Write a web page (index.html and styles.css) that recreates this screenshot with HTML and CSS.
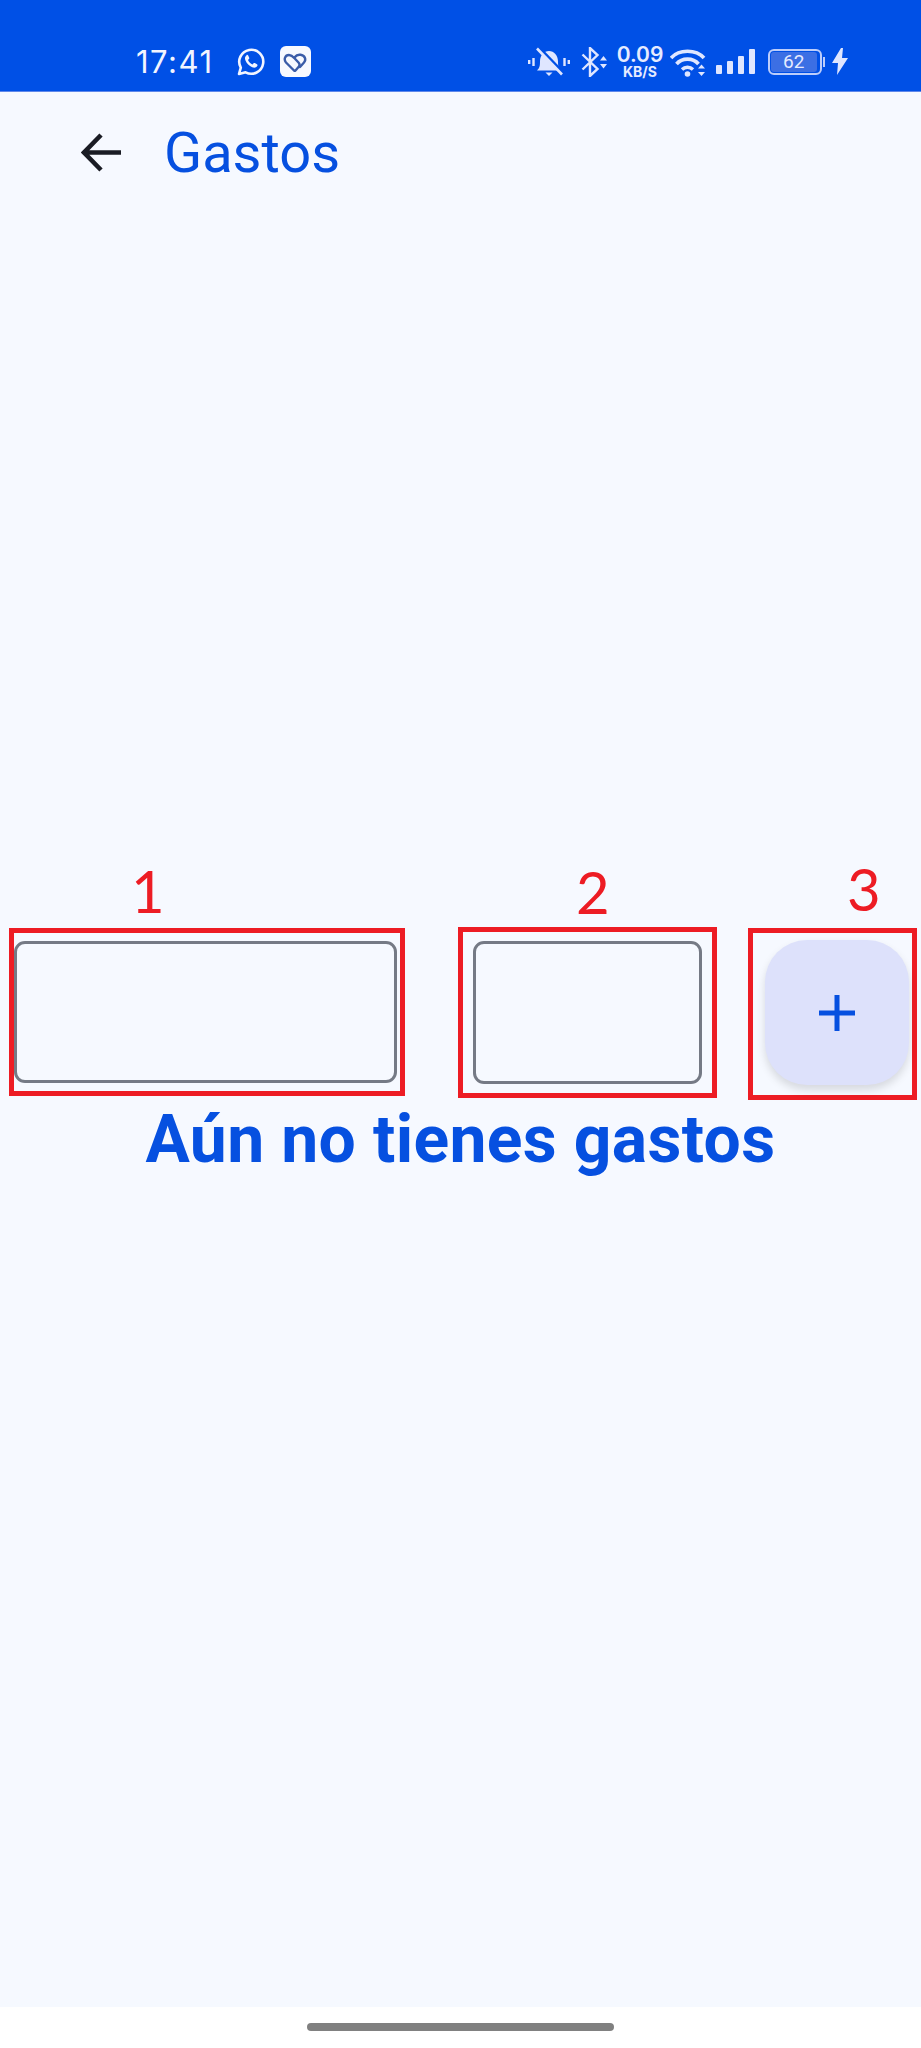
FILE: index.html
```html
<!DOCTYPE html>
<html lang="es">
<head>
  <meta charset="UTF-8">
  <meta name="viewport" content="width=device-width, initial-scale=1.0">
  <title>Gastos</title>
  <link rel="stylesheet" href="styles.css">
</head>
<body>
  <div id="status-bar">
    <div class="status-left">
      <span class="clock">17:41</span>
      <svg class="ic-whatsapp" viewBox="0 0 30 30">
        <path d="M3 27l1.800-6.400A12 12 0 1 1 9.600 25.300z" fill="none" stroke="#f2f5ff" stroke-width="2.600" stroke-linejoin="round"/>
        <path d="M10.500 8.500c-1.500 1-2 2.700-1 5 1.300 3 3.700 5.400 6.700 6.700 2.300 .9 4 .4 5-1.100.5-.8.400-1.400-.2-1.800l-2.200-1.200c-.6-.3-1-.2-1.400.3l-.8 1c-2-.8-3.700-2.400-4.600-4.500l.9-.8c.4-.4.5-.8.300-1.300l-1-2.300c-.4-.7-1-.8-1.700-.5z" fill="#f2f5ff"/>
      </svg>
      <div class="heart-tile">
        <svg viewBox="0 0 26 20" class="ic-heart">
          <path d="M11 18.500L3 10.500C.5 7.500 2 3 6 3c2.500 0 4 1.500 5.500 3.200l4 4.300c1.500 1.700 1.500 3 0 4.500l-3 3.500c-.5.500-1 .500-1.500 0z" fill="none" stroke="#3a5ca8" stroke-width="2.400" stroke-linejoin="round"/>
          <path d="M12 5C13 3.500 15 2.500 17.500 2.800c4.500 .5 6 5 3.500 7.700L17 15" fill="none" stroke="#3a5ca8" stroke-width="2.400" stroke-linecap="round"/>
        </svg>
      </div>
    </div>
    <div class="status-right">
      <svg class="ic-bell" viewBox="0 0 42 30">
        <path d="M1.200 13v4M5.500 11v8M36.500 11v8M40.800 13v4" stroke="#dfe6ff" stroke-width="2.400" fill="none"/>
        <path d="M9 23.500c2.500-2.500 3-4.500 3-9 0-6 4-10.500 9-10.500s9 4.500 9 10.500c0 4.500.5 6.500 3 9z" fill="#dfe6ff"/>
        <path d="M17.500 25.500h7L21 29z" fill="#dfe6ff"/>
        <path d="M10.500 0l25 26" stroke="#0050e6" stroke-width="3"/>
        <path d="M9 1.500l25 26" stroke="#dfe6ff" stroke-width="2.600"/>
      </svg>
      <svg class="ic-bt" viewBox="0 0 27 30">
        <path d="M1.500 7.500l15 14.500-7.500 7V1l7.500 7-15 14.500" fill="none" stroke="#dfe6ff" stroke-width="2.400"/>
        <path d="M19 13.500l3.500-4.500 3.500 4.500zM19 17l3.500 4.500 3.500-4.500z" fill="#dfe6ff"/>
      </svg>
      <div class="speed">
        <span class="speed-val">0.09</span>
        <span class="speed-unit">KB/S</span>
      </div>
      <svg class="ic-wifi" viewBox="0 0 37 30">
        <path d="M1 11C9 2 26 2 34 11" fill="none" stroke="#dfe6ff" stroke-width="3.600"/>
        <path d="M6.500 17C12 10.500 23 10.500 28.500 17" fill="none" stroke="#dfe6ff" stroke-width="3.600"/>
        <path d="M12 22.500c3-3 8-3 11 0" fill="none" stroke="#dfe6ff" stroke-width="3.400"/>
        <circle cx="17.500" cy="27" r="2.800" fill="#dfe6ff"/>
        <path d="M28 21.500l3.500-4 3.500 4zM28 25l3.500 4 3.500-4z" fill="#dfe6ff"/>
      </svg>
      <div class="signal">
        <i class="bar-1"></i><i class="bar-2"></i><i class="bar-3"></i><i class="bar-4"></i>
      </div>
      <div class="battery">
        <div class="battery-body"><div class="battery-fill">62</div></div>
        <div class="battery-tip"></div>
      </div>
      <svg class="ic-bolt" viewBox="0 0 16 27">
        <path d="M9 0L0 15h6L5 27 16 10h-6l1-10z" fill="#dfe6ff"/>
      </svg>
    </div>
  </div>

  <div id="app-bar">
    <svg class="ic-back" viewBox="0 0 42 40">
      <path d="M40 19.500H4M20 2L3 19.500 20 37" fill="none" stroke="#1a1c24" stroke-width="4.600"/>
    </svg>
    <h1>Gastos</h1>
  </div>

  <div id="content">
    <div class="fields">
      <div class="col col-name">
        <div class="mark">1</div>
        <div class="red-box"><div class="text-field"></div></div>
      </div>
      <div class="col col-amount">
        <div class="mark">2</div>
        <div class="red-box"><div class="text-field"></div></div>
      </div>
      <div class="col col-add">
        <div class="mark">3</div>
        <div class="red-box">
          <button class="fab">
            <svg viewBox="0 0 36 36"><path d="M18 0v36M0 18h36" stroke="#0650e0" stroke-width="5"/></svg>
          </button>
        </div>
      </div>
    </div>
    <h2>Aún no tienes gastos</h2>
  </div>

  <div id="nav-bar"><div class="pill"></div></div>
</body>
</html>
```
FILE: styles.css
```css
body {
  margin: 0;
  height: 2048px;
  display: flex;
  flex-direction: column;
  background-color: #f6f9ff;
  font-family: Roboto, sans-serif;
  overflow: hidden;
}
#status-bar {
  height: 92px;
  flex: none;
  box-sizing: border-box;
  padding: 0 73px 0 136px;
  display: flex;
  justify-content: space-between;
  align-items: center;
  background-color: #0050e6;
  border-bottom: 1px solid #5f88ea;
  color: #f2f5ff;
}
.status-left {
  display: flex;
  align-items: center;
  margin-top: 32px;
  height: 32px;
}
.clock {
  font-family: Inter, sans-serif;
  font-size: 31px;
  letter-spacing: 1.500px;
  width: 100px;
}
.ic-whatsapp {
  width: 30px;
  height: 30px;
}
.heart-tile {
  width: 31px;
  height: 31px;
  margin-left: 14px;
  background: #f7f9ff;
  border-radius: 6px;
  display: flex;
  align-items: center;
  justify-content: center;
}
.ic-heart {
  width: 26px;
  height: 20px;
}
.status-right {
  display: flex;
  align-items: center;
  margin-top: 32px;
  height: 32px;
}
.ic-bell {
  width: 42px;
  height: 30px;
}
.ic-bt {
  width: 27px;
  height: 30px;
  margin-left: 11px;
}
.speed {
  width: 46px;
  margin-left: 9px;
  display: flex;
  flex-direction: column;
  align-items: center;
  color: #e6ebff;
  font-weight: 600;
}
.speed-val {
  font-family: Inter, sans-serif;
  font-size: 21px;
  line-height: 20px;
}
.speed-unit {
  font-family: Inter, sans-serif;
  font-size: 14px;
  font-weight: 700;
  line-height: 14px;
}
.ic-wifi {
  width: 37px;
  height: 30px;
  margin-left: 7px;
}
.signal {
  display: flex;
  align-items: flex-end;
  gap: 5px;
  height: 25px;
  margin-left: 9px;
}
.signal i {
  display: block;
  width: 6px;
  background: #dfe6ff;
  border-radius: 1px;
}
.bar-1 { height: 9px; }
.bar-2 { height: 13px; }
.bar-3 { height: 18px; }
.bar-4 { height: 25px; }
.battery {
  display: flex;
  align-items: center;
  margin-left: 13px;
}
.battery-body {
  width: 54px;
  height: 26px;
  box-sizing: border-box;
  border: 2px solid #bccdfb;
  border-radius: 6px;
  padding: 1px;
}
.battery-fill {
  width: 34px;
  height: 100%;
  background: #3c6fe4;
  border-radius: 3px;
  color: #e6ebff;
  font-size: 19px;
  line-height: 20px;
  padding-left: 12px;
}
.battery-tip {
  width: 2px;
  height: 10px;
  margin-left: 1px;
  background: #bccdfb;
}
.ic-bolt {
  width: 16px;
  height: 27px;
  margin-left: 7px;
}
#app-bar {
  flex: none;
  height: 121px;
  box-sizing: border-box;
  padding-left: 81px;
  display: flex;
  align-items: center;
}
.ic-back {
  width: 42px;
  height: 40px;
}
#app-bar h1 {
  margin: 0 0 0 41px;
  font-size: 56px;
  font-weight: 400;
  color: #0650e0;
}
#content {
  flex: 1;
  padding-top: 647px;
}
.fields {
  display: flex;
  align-items: flex-start;
  padding-left: 9px;
}
.mark {
  font-family: Lato, sans-serif;
  font-size: 58px;
  line-height: 50px;
  padding-bottom: 12px;
  color: #ed1c24;
}
.red-box {
  box-sizing: border-box;
  border: 5px solid #ed1c24;
  display: flex;
}
.col-name {
  width: 396px;
  padding-top: 6px;
}
.col-name .mark { padding-left: 122px; }
.col-name .red-box {
  height: 168px;
  padding: 8px 3px 8px 0;
}
.col-amount {
  width: 259px;
  margin-left: 53px;
  padding-top: 5px;
}
.col-amount .mark {
  padding-left: 118px;
  line-height: 54px;
  padding-bottom: 8px;
}
.col-amount .red-box {
  height: 171px;
  padding: 9px 10px 9px 10px;
}
.col-add {
  width: 169px;
  margin-left: 31px;
  padding-top: 6px;
}
.col-add .mark {
  padding-left: 99px;
  line-height: 46px;
  padding-bottom: 16px;
}
.col-add .red-box {
  height: 172px;
  padding: 7px 3px 10px 12px;
}
.text-field {
  flex: 1;
  box-sizing: border-box;
  border: 3px solid #757a85;
  border-radius: 11px;
}
.fab {
  flex: 1;
  border: none;
  padding: 0;
  border-radius: 42px;
  background: #dde1fb;
  box-shadow: 0 5px 9px rgba(0, 0, 0, 0.13);
  display: flex;
  align-items: center;
  justify-content: center;
}
.fab svg {
  width: 36px;
  height: 36px;
}
#content h2 {
  margin: 4px 0 0;
  text-align: center;
  font-size: 66px;
  letter-spacing: 0.35px;
  font-weight: 700;
  line-height: 72px;
  color: #0650e0;
}
#nav-bar {
  flex: none;
  height: 41px;
  background: #fff;
  display: flex;
  align-items: center;
  justify-content: center;
}
.pill {
  width: 307px;
  height: 8px;
  border-radius: 4px;
  background: #808080;
  margin-bottom: 2px;
}
```
